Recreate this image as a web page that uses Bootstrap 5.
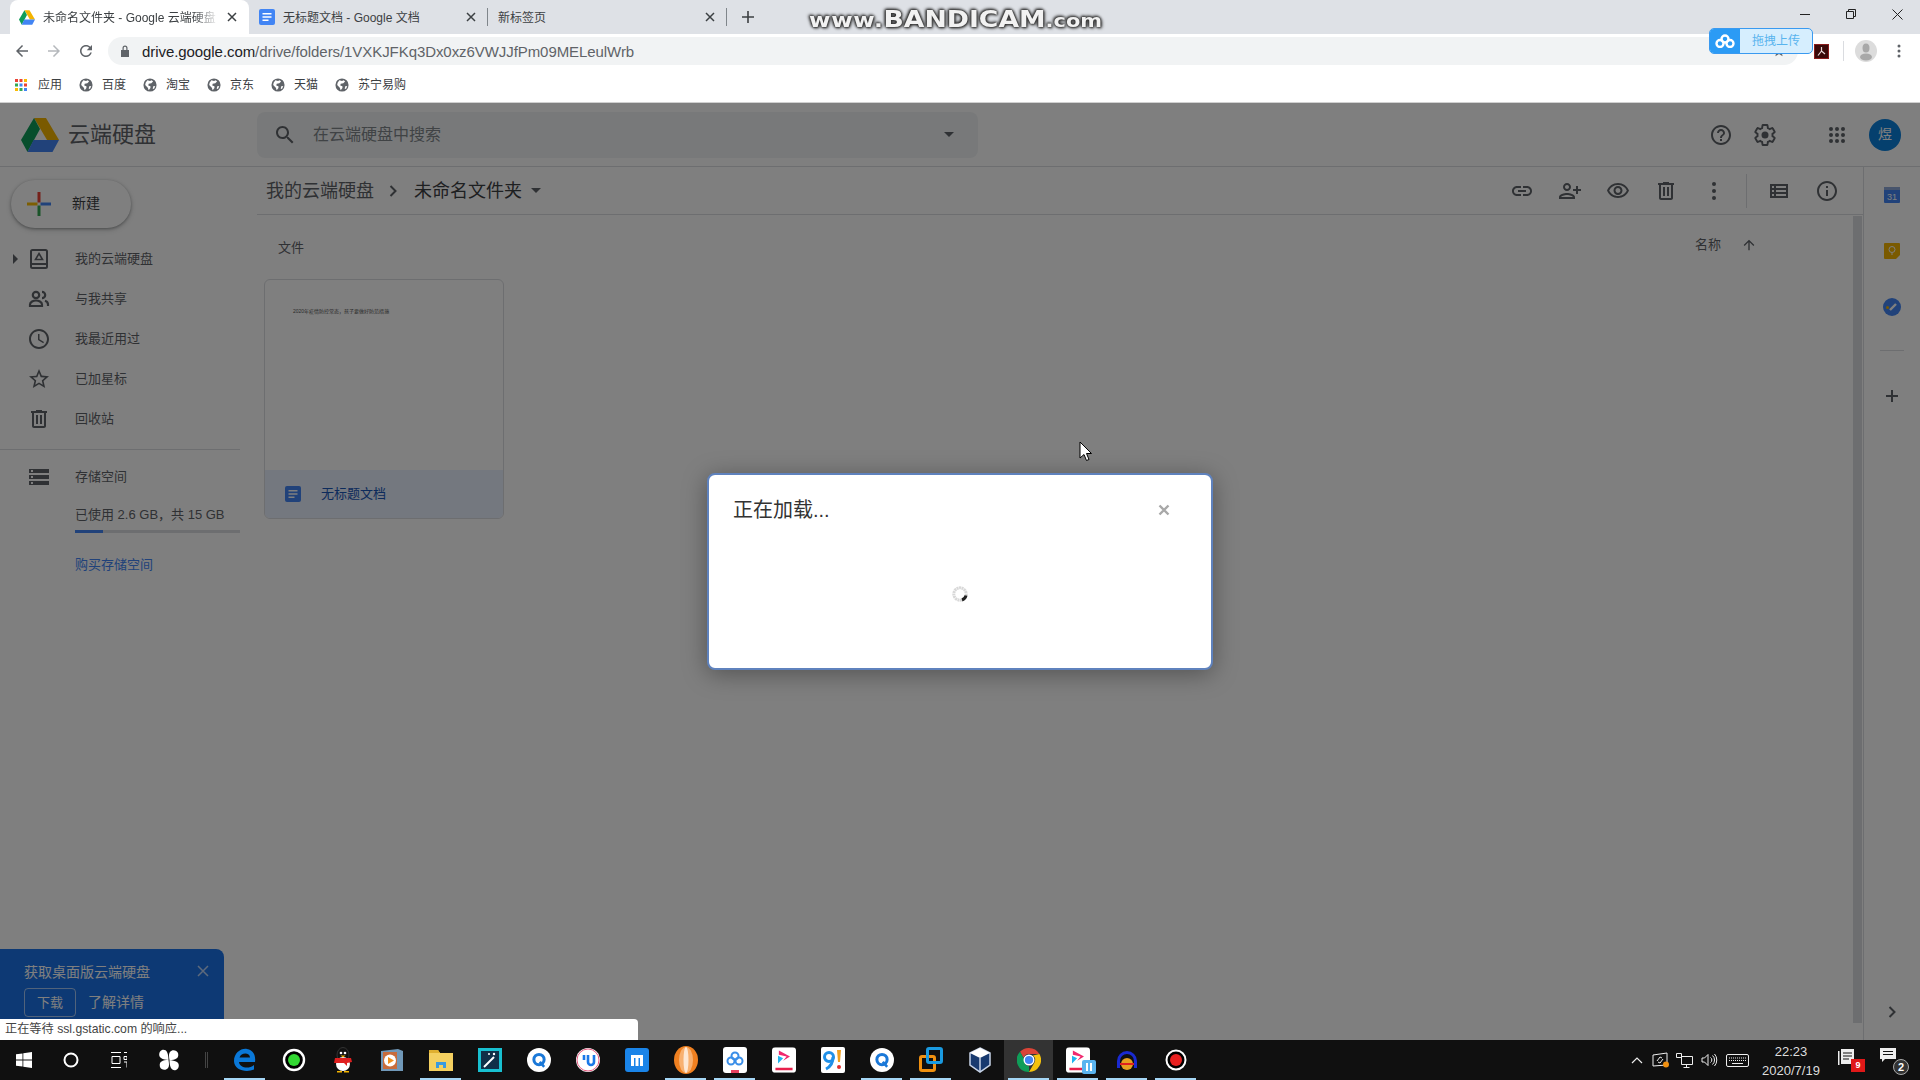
<!DOCTYPE html>
<html lang="zh-CN">
<head>
  <meta charset="UTF-8">
  <title>未命名文件夹 - Google 云端硬盘</title>
  <link href="https://cdn.jsdelivr.net/npm/bootstrap@5.3.2/dist/css/bootstrap.min.css" rel="stylesheet">
  <style>
    html, body { width: 1920px; height: 1080px; overflow: hidden; }
    body { font-family: "Liberation Sans", "Noto Sans CJK SC", sans-serif; font-size: 13px; color: #5f6368; background: #fff; position: relative; }
    svg { display: block; flex: none; }
    .ico { fill: #5f6368; }

    /* browser chrome */
    .tabstrip { height: 34px; background: #dee1e6; padding-left: 10px; color: #3c4043; font-size: 12px; }
    .ctab { width: 239px; height: 34px; padding-right: 8px; }
    .ctab-active { background: #fff; border-radius: 8px 8px 0 0; padding-left: 9px; }
    .ctab-second { padding-left: 10px; }
    .ctab-third { padding-left: 10px; }
    .ctab-line { position: relative; }
    .ctab-line::after { content: ""; position: absolute; right: 0; top: 8px; height: 18px; width: 1px; background: #80868b; }
    .ctab-title { flex: 1; overflow: hidden; white-space: nowrap; padding-top: 2px; }
    .ctab-fade { -webkit-mask-image: linear-gradient(to right, #000 85%, transparent 100%); mask-image: linear-gradient(to right, #000 85%, transparent 100%); }
    .tab-gap { margin-right: 4px; }
    .new-tab { margin-left: 14px; }
    .winbtns { margin-left: auto; width: 138px; height: 28px; align-self: flex-start; }
    .winbtns > div { width: 46px; }
    .toolbar { height: 34px; padding-left: 6px; }
    .tool-cell { width: 32px; }
    .omnibox { width: 1690px; height: 28px; margin-left: 6px; background: #f1f3f4; border-radius: 14px; padding: 0 12px; font-size: 15px; letter-spacing: -.07px; color: #5f6368; }
    .omni-url { margin-left: 4px; padding-top: 2px; }
    .omni-host { color: #202124; }
    .bookmarks { padding-left: 15px; gap: 17px; font-size: 12px; color: #3c4043; border-bottom: 1px solid #d0d0d0; height: 35px; }
    .mark-item { gap: 9px; }
    .mark-apps { gap: 11px; }
    .pdf-box { width: 15px; height: 15px; margin-left: 16px; background: #3b0a0a; border: 1px solid #8a1c1c; }
    .tool-sep { width: 1px; height: 20px; background: #dadce0; margin-left: 14px; }
    .chrome-user { width: 22px; height: 22px; border-radius: 50%; background: #dcdcdc; margin-left: 11px; }

    /* drive page */
    .drive { height: 937px; position: relative; overflow: hidden; }
    .drive-top { height: 64px; border-bottom: 1px solid #dadce0; }
    .brand { width: 257px; padding-left: 21px; font-size: 22px; gap: 9px; color: #5f6368; }
    .searchbox { width: 721px; height: 46px; background: #f1f3f4; border-radius: 8px; padding: 0 17px 0 16px; font-size: 16px; color: #80868b; }
    .searchbox-text { margin-left: 16px; flex: 1; }
    .caret-down { width: 0; height: 0; border-left: 5px solid transparent; border-right: 5px solid transparent; border-top: 5px solid #5f6368; }
    .search-caret { margin-right: 7px; }
    .top-actions { margin-left: auto; width: 220px; }
    .gear-ico { margin-left: 20px; }
    .apps-ico { margin-left: 52px; }
    .avatar { width: 32px; height: 32px; flex: none; border-radius: 50%; background: #0a80dc; color: #fff; font-size: 14px; margin-left: 24px; margin-right: 19px; }
    .drive-body { height: 873px; }

    .side { width: 257px; }
    .new-btn { width: 120px; height: 48px; margin: 13px 0 11px 11px; border-radius: 24px; background: #fff; box-shadow: 0 1px 3px rgba(60,64,67,.45), 0 2px 6px rgba(60,64,67,.2); padding: 0 0 0 16px; gap: 21px; font-size: 14px; color: #3c4043; border: 0; }
    .new-btn span { padding-bottom: 2px; }
    .side-item { height: 40px; padding-left: 27px; gap: 24px; position: relative; }
    .side-arrow { position: absolute; left: 13px; top: 15px; width: 0; height: 0; border-top: 5px solid transparent; border-bottom: 5px solid transparent; border-left: 5px solid #5f6368; }
    .side-rule { height: 1px; background: #dadce0; width: 240px; margin: 10px 0 7px; }
    .quota { padding-left: 75px; width: 240px; }
    .quota-text { margin-top: 6px; height: 24px; line-height: 24px; white-space: nowrap; font-size: 13px; }
    .quota-bar { height: 3px; margin-top: 3px; background: #dadce0; border-radius: 0; }
    .quota-bar .progress-bar { background: #4285f4; }
    .quota-link { display: block; margin-top: 22px; color: #4285f4; text-decoration: none; }

    .main { width: 1606px; }
    .crumbs { height: 48px; border-bottom: 1px solid #dadce0; padding-left: 9px; font-size: 18px; color: #5f6368; }
    .crumb-txt { padding-top: 2px; }
    .crumb-now { color: #3c4043; }
    .crumb-sep { margin: 0 17px 0 15px; }
    .crumb-caret { margin-left: 9px; }
    .acts { margin-left: auto; padding-right: 12px; height: 47px; }
    .act { width: 48px; }
    .act-rule { width: 1px; height: 34px; background: #dadce0; margin: 0 8px; }
    .content { padding-left: 7px; }
    .label-row { height: 24px; margin-top: 21px; margin-bottom: 19px; padding-left: 14px; padding-right: 96px; }
    .sorter { margin-top: -6px; gap: 20px; }
    .file-card { width: 240px; height: 240px; border: 1px solid #dadce0; border-radius: 6px; overflow: hidden; background: #fff; }
    .file-thumb { height: 191px; padding: 27px 0 0 28px; font-size: 5px; line-height: 8px; color: #555; white-space: nowrap; }
    .file-foot { height: 48px; background: #e8f0fe; color: #1a56b8; padding-left: 20px; gap: 20px; }
    .bar-track { width: 10px; }
    .bar-thumb { width: 9px; height: 807px; margin-top: 1px; background: #dadce0; }

    .rail { width: 57px; border-left: 1px solid #dadce0; }
    .rail-cell { height: 56px; }
    .rail-rule { width: 24px; height: 1px; background: #dadce0; margin: 15px 0 0; }
    .rail-plus { margin-top: 38px; }
    .rail-end { margin-top: auto; margin-bottom: 22px; }

    .toast-box { position: absolute; left: 0; bottom: 0; width: 224px; height: 91px; background: #1a73e8; color: #fff; border-radius: 0 8px 0 0; padding: 13px 0 0 24px; font-size: 14px; }
    .toast-x { position: absolute; right: 15px; top: 16px; }
    .toast-btn { width: 52px; height: 29px; padding: 0; font-size: 13px; color: #fff; border: 1px solid rgba(255,255,255,.6); border-radius: 4px; margin-top: 5px; }
    .toast-more { margin-left: 12px; margin-top: 5px; }

    .dimmer { position: absolute; inset: 0; background: rgba(0,0,0,.5); }
    .status-tip { position: absolute; left: 0; bottom: 0; width: 638px; height: 21px; line-height: 21px; padding-left: 5px; background: #fff; border-radius: 0 4px 0 0; font-size: 12.2px; color: #444; }

    .load-box { position: absolute; left: 707px; top: 370px; width: 506px; height: 197px; border: 2px solid #5f82bd; border-radius: 8px; background: #fff; box-shadow: 0 4px 24px rgba(0,0,0,.35); }
    .load-head { padding: 20px 24px 0 24px; font-size: 20px; color: #333; }
    .load-close { border: 0; margin-right: 17px; line-height: 0; }
    .load-spin { margin: 61px auto 0; }
    .pointer { position: absolute; left: 1079px; top: 441px; z-index: 5; }

    /* overlays on the browser frame */
    .bandicam { position: absolute; left: 809px; top: 2px; font-family: "DejaVu Sans", sans-serif; font-weight: 700; color: #f2f2f2; white-space: nowrap; line-height: 34px; text-shadow: 0 0 2px #333, 0 0 3px #333, 1px 1px 3px #333, -1px -1px 3px #333; transform: scaleX(1.16); transform-origin: left; }
    .bandicam-big { font-size: 23px; }
    .bandicam-sm { font-size: 18px; }
    .bandicam-www { font-size: 20px; letter-spacing: .6px; }
    .pan-drop { position: absolute; left: 1709px; top: 28px; width: 104px; height: 26px; border: 1px solid #3a9af0; border-radius: 5px; background: #d6eefe; overflow: hidden; color: #59b4ee; font-size: 12px; }
    .pan-logo { width: 30px; background: #2b9bf5; height: 100%; }

    /* windows taskbar */
    .taskbar { position: absolute; left: 0; right: 0; bottom: 0; height: 40px; background: #101010; color: #fff; }
    .task-start { width: 220px; height: 40px; }
    .task-start > div { position: absolute; top: 0; height: 40px; }
    .task-cell { width: 49px; height: 40px; position: relative; }
    .task-on::after { content: ""; position: absolute; left: 4px; right: 4px; bottom: 0; height: 2px; background: #a5d6f5; }
    .task-now { background: #333; }
    .task-start > .task-divider { left: 205px; top: 12px; width: 3px; height: 16px; border-left: 1px solid #444; border-right: 1px solid #444; }
    .tray { margin-left: auto; padding-right: 18px; }
    .tray-chevron { margin-right: 5px; }
    .tray-net { margin-left: 6px; }
    .clock { width: 72px; font-size: 13px; line-height: 19px; text-align: center; color: #ddd; margin-left: 6px; margin-right: 11px; padding-top: 2px; }
    .note-wrap { position: relative; width: 22px; height: 24px; }
    .note-last { margin-left: 20px; }
    .note-badge { position: absolute; right: -5px; bottom: 0; width: 14px; height: 13px; background: #e01818; color: #fff; font-size: 9px; font-weight: 700; line-height: 13px; text-align: center; }
    .note-count { position: absolute; right: -7px; bottom: -3px; width: 16px; height: 16px; border-radius: 50%; background: #333; border: 1px solid #aaa; color: #fff; font-size: 11px; font-weight: 700; line-height: 14px; text-align: center; }
    .youku-pause { position: absolute; left: 29px; top: 20px; }
  </style>
</head>
<body>

<svg width="0" height="0" class="position-absolute">
  <symbol id="i-drive" viewBox="0 0 38 34">
    <path fill="#f4b400" d="M13 0h12l13 22H26z"/>
    <path fill="#0f9d58" d="M13 0l6 11L6.500 34 0 22z"/>
    <path fill="#4285f4" d="M12.500 22H38l-6.500 12H6.500z"/>
  </symbol>
  <symbol id="i-doc" viewBox="0 0 16 16">
    <rect width="16" height="16" rx="2" fill="#4285f4"/>
    <path fill="#fff" d="M3.500 4h9v1.600h-9zM3.500 7.200h9v1.600h-9zM3.500 10.400h6v1.600h-6z"/>
  </symbol>
  <symbol id="i-globe" viewBox="0 0 16 16">
    <circle cx="8" cy="8" r="7.500" fill="#5f6368"/>
    <path fill="#fff" d="M5 2.500l3 1 2-1 1.500 1.500-2 2-3 .5-.5 2 2.500 1v2L6.500 14l-1-3-3-3 .5-2.500zM12 9l2 .5-1.500 3-1.500-.5z"/>
  </symbol>
  <symbol id="i-trash" viewBox="0 0 24 24"><path d="M15 4V3H9v1H4v2h1v13c0 1.100.9 2 2 2h10c1.100 0 2-.9 2-2V6h1V4h-5zm2 15H7V6h10v13zM9 8h2v9H9zm4 0h2v9h-2z"/></symbol>
  <symbol id="i-qq" viewBox="0 0 28 28">
    <circle cx="14" cy="14" r="14" fill="#fff"/>
    <circle cx="14" cy="13.500" r="6" fill="none" stroke="#1a78d8" stroke-width="3.500"/>
    <path d="M15 16l5 6" stroke="#1a78d8" stroke-width="3"/>
  </symbol>
  <symbol id="i-youku" viewBox="0 0 28 30">
    <rect width="28" height="30" rx="4" fill="#fff"/>
    <path fill="#f0286e" d="M8 4l13 7-8 5 4-5-9-2z"/>
    <path fill="#1eb4f0" d="M7 10l6 3-6 6z"/>
    <path fill="#e8204c" d="M4 24h20v3H4z"/>
  </symbol>
</svg>

<!-- Tab strip -->
<div class="tabstrip d-flex">
  <div class="ctab ctab-active d-flex align-items-center">
    <svg width="16" height="15" class="me-2"><use href="#i-drive"/></svg>
    <span class="ctab-title ctab-fade">未命名文件夹 - Google 云端硬盘</span>
    <svg width="10" height="10" viewBox="0 0 10 10" class="tab-gap ms-2"><path d="M1 1l8 8M9 1l-8 8" stroke="#3c4043" stroke-width="1.500"/></svg>
  </div>
  <div class="ctab ctab-second ctab-line d-flex align-items-center">
    <svg width="16" height="16" class="me-2" viewBox="0 0 16 16"><use href="#i-doc"/></svg>
    <span class="ctab-title">无标题文档 - Google 文档</span>
    <svg width="10" height="10" viewBox="0 0 10 10" class="tab-gap"><path d="M1 1l8 8M9 1l-8 8" stroke="#3c4043" stroke-width="1.500"/></svg>
  </div>
  <div class="ctab ctab-third ctab-line d-flex align-items-center">
    <span class="ctab-title">新标签页</span>
    <svg width="10" height="10" viewBox="0 0 10 10" class="tab-gap"><path d="M1 1l8 8M9 1l-8 8" stroke="#3c4043" stroke-width="1.500"/></svg>
  </div>
  <div class="d-flex align-items-center new-tab">
    <svg width="14" height="14" viewBox="0 0 14 14"><path d="M7 1v12M1 7h12" stroke="#3c4043" stroke-width="1.600"/></svg>
  </div>
  <div class="winbtns d-flex">
    <div class="d-flex align-items-center justify-content-center"><svg width="10" height="10" viewBox="0 0 10 10"><path d="M0 5.500h10" stroke="#222"/></svg></div>
    <div class="d-flex align-items-center justify-content-center"><svg width="10" height="10" viewBox="0 0 10 10"><path d="M.5 2.500h7v7h-7zM2.500 2.500v-2h7v7h-2" fill="none" stroke="#222"/></svg></div>
    <div class="d-flex align-items-center justify-content-center"><svg width="11" height="11" viewBox="0 0 11 11"><path d="M.5.500l10 10M10.500.500l-10 10" stroke="#222"/></svg></div>
  </div>
</div>

<!-- Toolbar -->
<div class="toolbar d-flex align-items-center">
  <div class="tool-cell d-flex justify-content-center"><svg width="18" height="18" viewBox="0 0 24 24" fill="#5f6368"><path d="M20 11H7.830l5.590-5.590L12 4l-8 8 8 8 1.410-1.410L7.830 13H20v-2z"/></svg></div>
  <div class="tool-cell d-flex justify-content-center"><svg width="18" height="18" viewBox="0 0 24 24" fill="#b5b8bc"><path d="M4 11h12.170l-5.590-5.590L12 4l8 8-8 8-1.410-1.410L16.170 13H4v-2z"/></svg></div>
  <div class="tool-cell d-flex justify-content-center"><svg width="18" height="18" viewBox="0 0 24 24" fill="#5f6368"><path d="M17.650 6.350C16.200 4.900 14.210 4 12 4c-4.420 0-7.990 3.580-7.990 8s3.570 8 7.990 8c3.730 0 6.840-2.550 7.730-6h-2.080c-.82 2.330-3.040 4-5.650 4-3.310 0-6-2.690-6-6s2.690-6 6-6c1.660 0 3.140.69 4.220 1.780L13 11h7V4l-2.350 2.350z"/></svg></div>
  <div class="omnibox d-flex align-items-center">
    <svg width="10" height="12" viewBox="0 0 10 12" class="me-2"><path fill="#5f6368" d="M1 5h8v7H1zM2.500 5V3a2.500 2.500 0 0 1 5 0v2H6.300V3a1.300 1.300 0 0 0-2.600 0v2z"/></svg>
    <span class="omni-url"><span class="omni-host">drive.google.com</span>/drive/folders/1VXKJFKq3Dx0xz6VWJJfPm09MELeulWrb</span>
    <svg class="ms-auto" width="14" height="14" viewBox="0 0 24 24" fill="#5f6368"><path d="M22 9.240l-7.190-.62L12 2 9.190 8.630 2 9.240l5.460 4.730L5.820 21 12 17.270 18.180 21l-1.630-7.030L22 9.240zM12 15.400l-3.760 2.270 1-4.280-3.320-2.880 4.380-.38L12 6.100l1.710 4.040 4.380.38-3.320 2.880 1 4.280L12 15.400z"/></svg>
  </div>
  <div class="pdf-box d-flex align-items-center justify-content-center">
    <svg width="11" height="11" viewBox="0 0 11 11"><path d="M5.500 1v4M5.500 5L2 9.500M5.500 5L9 8" stroke="#e8d8d8" fill="none" stroke-width="1.200"/></svg>
  </div>
  <div class="tool-sep"></div>
  <div class="chrome-user d-flex justify-content-center overflow-hidden">
    <svg width="22" height="22" viewBox="0 0 22 22" fill="#a8a8a8"><ellipse cx="11" cy="8" rx="3.500" ry="4.500"/><ellipse cx="11" cy="17" rx="6" ry="3.500"/></svg>
  </div>
  <div class="ms-3 ps-1 d-flex align-items-center">
    <svg width="4" height="14" viewBox="0 0 4 14" fill="#5f6368"><circle cx="2" cy="2" r="1.500"/><circle cx="2" cy="7" r="1.500"/><circle cx="2" cy="12" r="1.500"/></svg>
  </div>
</div>

<!-- Bookmarks bar -->
<div class="bookmarks d-flex align-items-center">
  <div class="mark-item mark-apps d-flex align-items-center">
    <svg width="12" height="12" viewBox="0 0 12 12"><g><rect width="3" height="3" fill="#ea4335"/><rect x="4.500" width="3" height="3" fill="#ea4335"/><rect x="9" width="3" height="3" fill="#fbbc04"/><rect y="4.500" width="3" height="3" fill="#34a853"/><rect x="4.500" y="4.500" width="3" height="3" fill="#4285f4"/><rect x="9" y="4.500" width="3" height="3" fill="#ea4335"/><rect y="9" width="3" height="3" fill="#fbbc04"/><rect x="4.500" y="9" width="3" height="3" fill="#34a853"/><rect x="9" y="9" width="3" height="3" fill="#4285f4"/></g></svg>
    <span>应用</span>
  </div>
  <div class="mark-item d-flex align-items-center"><svg width="14" height="14"><use href="#i-globe"/></svg><span>百度</span></div>
  <div class="mark-item d-flex align-items-center"><svg width="14" height="14"><use href="#i-globe"/></svg><span>淘宝</span></div>
  <div class="mark-item d-flex align-items-center"><svg width="14" height="14"><use href="#i-globe"/></svg><span>京东</span></div>
  <div class="mark-item d-flex align-items-center"><svg width="14" height="14"><use href="#i-globe"/></svg><span>天猫</span></div>
  <div class="mark-item d-flex align-items-center"><svg width="14" height="14"><use href="#i-globe"/></svg><span>苏宁易购</span></div>
</div>

<!-- Drive page -->
<div class="drive">
  <div class="drive-top d-flex align-items-center">
    <div class="brand d-flex align-items-center">
      <svg width="38" height="34"><use href="#i-drive"/></svg>
      <span>云端硬盘</span>
    </div>
    <div class="searchbox d-flex align-items-center">
      <svg width="24" height="24" viewBox="0 0 24 24" class="ico"><path d="M15.500 14h-.79l-.28-.27C15.410 12.590 16 11.110 16 9.500 16 5.910 13.090 3 9.500 3S3 5.910 3 9.500 5.910 16 9.500 16c1.610 0 3.090-.59 4.230-1.570l.27.28v.79l5 4.990L20.490 19l-4.990-5zm-6 0C7.010 14 5 11.990 5 9.500S7.010 5 9.500 5 14 7.010 14 9.500 11.990 14 9.500 14z"/></svg>
      <span class="searchbox-text">在云端硬盘中搜索</span>
      <span class="caret-down search-caret"></span>
    </div>
    <div class="top-actions d-flex align-items-center">
      <svg width="24" height="24" viewBox="0 0 24 24" class="ico ms-auto"><path d="M11 18h2v-2h-2v2zm1-16C6.480 2 2 6.480 2 12s4.480 10 10 10 10-4.480 10-10S17.520 2 12 2zm0 18c-4.410 0-8-3.590-8-8s3.590-8 8-8 8 3.590 8 8-3.590 8-8 8zm0-14c-2.210 0-4 1.790-4 4h2c0-1.100.9-2 2-2s2 .9 2 2c0 2-3 1.750-3 5h2c0-2.250 3-2.500 3-5 0-2.210-1.790-4-4-4z"/></svg>
      <svg width="24" height="24" viewBox="0 0 24 24" class="gear-ico"><path fill="none" stroke="#5f6368" stroke-width="1.900" d="M19.430 12.980c.04-.32.07-.64.07-.98s-.03-.66-.07-.98l2.110-1.650c.19-.15.24-.42.12-.64l-2-3.460c-.12-.22-.39-.3-.61-.22l-2.490 1c-.52-.4-1.080-.73-1.690-.98l-.38-2.650C14.460 2.180 14.250 2 14 2h-4c-.25 0-.46.18-.49.42l-.38 2.650c-.61.25-1.170.59-1.690.98l-2.490-1c-.23-.09-.49 0-.61.22l-2 3.460c-.13.22-.07.49.12.64l2.110 1.650c-.04.32-.07.65-.07.98s.03.66.07.98l-2.110 1.650c-.19.15-.24.42-.12.64l2 3.460c.12.22.39.3.61.22l2.490-1c.52.4 1.080.73 1.690.98l.38 2.650c.03.24.24.42.49.42h4c.25 0 .46-.18.49-.42l.38-2.650c.61-.25 1.170-.59 1.690-.98l2.490 1c.23.09.49 0 .61-.22l2-3.460c.12-.22.07-.49-.12-.64l-2.110-1.650z"/><circle cx="12" cy="12" r="3.500" fill="#5f6368"/></svg>
      <svg width="16" height="16" viewBox="0 0 16 16" class="ico apps-ico"><circle cx="2" cy="2" r="2"/><circle cx="8" cy="2" r="2"/><circle cx="14" cy="2" r="2"/><circle cx="2" cy="8" r="2"/><circle cx="8" cy="8" r="2"/><circle cx="14" cy="8" r="2"/><circle cx="2" cy="14" r="2"/><circle cx="8" cy="14" r="2"/><circle cx="14" cy="14" r="2"/></svg>
      <div class="avatar d-flex align-items-center justify-content-center">煜</div>
    </div>
  </div>

  <div class="drive-body d-flex">
    <!-- Left navigation -->
    <div class="side">
      <button type="button" class="btn new-btn d-flex align-items-center">
        <svg width="24" height="24" viewBox="0 0 24 24"><path fill="#ea4335" d="M10.500 0h3v10.500h-3z"/><path fill="#4285f4" d="M13.500 10.500H24v3H13.500z"/><path fill="#34a853" d="M10.500 13.500h3V24h-3z"/><path fill="#fbbc04" d="M0 10.500h10.500v3H0z"/></svg>
        <span>新建</span>
      </button>
      <div class="side-item d-flex align-items-center">
        <span class="side-arrow"></span>
        <svg width="24" height="24" viewBox="0 0 24 24"><rect x="4" y="3" width="16" height="18" rx="1.500" fill="none" stroke="#5f6368" stroke-width="2"/><path d="M4 17h16" stroke="#5f6368" stroke-width="2"/><path d="M12 6.500l3.500 6h-7z" fill="none" stroke="#5f6368" stroke-width="1.600"/></svg>
        <span>我的云端硬盘</span>
      </div>
      <div class="side-item d-flex align-items-center">
        <svg width="24" height="24" viewBox="0 0 24 24" fill="none" stroke="#5f6368" stroke-width="2.200"><circle cx="9" cy="8" r="3.200"/><path d="M3 19v-1.500c0-2.500 3.500-4 6-4s6 1.500 6 4V19z"/><path d="M15 4.800a3.200 3.200 0 0 1 0 6.400M18 13.800c1.800.6 3 1.800 3 3.700V19"/></svg>
        <span>与我共享</span>
      </div>
      <div class="side-item d-flex align-items-center">
        <svg width="24" height="24" viewBox="0 0 24 24" class="ico"><path d="M11.990 2C6.470 2 2 6.480 2 12s4.470 10 9.990 10C17.520 22 22 17.520 22 12S17.520 2 11.990 2zM12 20c-4.420 0-8-3.580-8-8s3.580-8 8-8 8 3.580 8 8-3.580 8-8 8zm.5-13H11v6l5.250 3.150.75-1.230-4.500-2.670z"/></svg>
        <span>我最近用过</span>
      </div>
      <div class="side-item d-flex align-items-center">
        <svg width="24" height="24" viewBox="0 0 24 24" class="ico"><path d="M22 9.240l-7.190-.62L12 2 9.190 8.630 2 9.240l5.460 4.730L5.820 21 12 17.270 18.180 21l-1.630-7.030L22 9.240zM12 15.400l-3.760 2.270 1-4.280-3.320-2.880 4.380-.38L12 6.100l1.710 4.040 4.380.38-3.320 2.880 1 4.280L12 15.400z"/></svg>
        <span>已加星标</span>
      </div>
      <div class="side-item d-flex align-items-center">
        <svg width="24" height="24" class="ico"><use href="#i-trash"/></svg>
        <span>回收站</span>
      </div>
      <div class="side-rule"></div>
      <div class="side-item d-flex align-items-center">
        <svg width="24" height="24" viewBox="0 0 24 24" class="ico"><path d="M2 20h20v-4H2v4zm2-3h2v2H4v-2zM2 4v4h20V4H2zm4 3H4V5h2v2zm-4 7h20v-4H2v4zm2-3h2v2H4v-2z"/></svg>
        <span>存储空间</span>
      </div>
      <div class="quota">
        <div class="quota-text">已使用 2.6 GB，共 15 GB</div>
        <div class="progress quota-bar"><div class="progress-bar" style="width: 17%"></div></div>
        <a class="quota-link" href="#">购买存储空间</a>
      </div>
    </div>

    <!-- Folder view -->
    <div class="main d-flex flex-column">
      <div class="crumbs d-flex align-items-center">
        <span class="crumb-txt">我的云端硬盘</span>
        <svg class="crumb-sep" width="8" height="12" viewBox="0 0 8 12"><path d="M1.500 1l5 5-5 5" fill="none" stroke="#5f6368" stroke-width="2"/></svg>
        <span class="crumb-txt crumb-now">未命名文件夹</span>
        <span class="caret-down crumb-caret"></span>
        <div class="acts d-flex align-items-center">
          <div class="act d-flex justify-content-center"><svg width="24" height="24" viewBox="0 0 24 24" class="ico"><path d="M3.900 12c0-1.710 1.390-3.100 3.100-3.100h4V7H7c-2.760 0-5 2.240-5 5s2.240 5 5 5h4v-1.900H7c-1.710 0-3.100-1.390-3.100-3.100zM8 13h8v-2H8v2zm9-6h-4v1.900h4c1.710 0 3.100 1.390 3.100 3.100s-1.390 3.100-3.100 3.100h-4V17h4c2.760 0 5-2.240 5-5s-2.240-5-5-5z"/></svg></div>
          <div class="act d-flex justify-content-center"><svg width="24" height="24" viewBox="0 0 24 24" class="ico"><g transform="translate(24,0) scale(-1,1)"><path d="M15 12c2.210 0 4-1.790 4-4s-1.790-4-4-4-4 1.790-4 4 1.790 4 4 4zm0-6c1.100 0 2 .9 2 2s-.9 2-2 2-2-.9-2-2 .9-2 2-2zm0 8c-2.670 0-8 1.340-8 4v2h16v-2c0-2.660-5.330-4-8-4zm-6 4c.22-.72 3.310-2 6-2 2.700 0 5.800 1.290 6 2H9zm-3-3v-3h3v-2H6V7H4v3H1v2h3v3h2z"/></g></svg></div>
          <div class="act d-flex justify-content-center"><svg width="24" height="24" viewBox="0 0 24 24" class="ico"><path d="M12 6a9.770 9.770 0 0 1 8.820 5.500C19.170 14.870 15.790 17 12 17s-7.170-2.130-8.820-5.500A9.770 9.770 0 0 1 12 6m0-2C7 4 2.730 7.110 1 11.500 2.730 15.890 7 19 12 19s9.270-3.110 11-7.500C21.270 7.110 17 4 12 4zm0 5a2.500 2.500 0 0 1 0 5 2.500 2.500 0 0 1 0-5m0-2c-2.480 0-4.500 2.020-4.500 4.500S9.520 16 12 16s4.500-2.020 4.500-4.500S14.480 7 12 7z"/></svg></div>
          <div class="act d-flex justify-content-center"><svg width="24" height="24" class="ico"><use href="#i-trash"/></svg></div>
          <div class="act d-flex justify-content-center"><svg width="24" height="24" viewBox="0 0 24 24" class="ico"><circle cx="12" cy="5" r="2"/><circle cx="12" cy="12" r="2"/><circle cx="12" cy="19" r="2"/></svg></div>
          <div class="act-rule"></div>
          <div class="act d-flex justify-content-center"><svg width="24" height="24" viewBox="0 0 24 24" class="ico"><path d="M3 5v14h18V5H3zm4 2v2H5V7h2zm-2 6v-2h2v2H5zm0 2h2v2H5v-2zm14 2H9v-2h10v2zm0-4H9v-2h10v2zm0-4H9V7h10v2z"/></svg></div>
          <div class="act d-flex justify-content-center"><svg width="24" height="24" viewBox="0 0 24 24" class="ico"><path d="M11 7h2v2h-2zm0 4h2v6h-2zm1-9C6.480 2 2 6.480 2 12s4.480 10 10 10 10-4.480 10-10S17.520 2 12 2zm0 18c-4.410 0-8-3.590-8-8s3.590-8 8-8 8 3.590 8 8-3.590 8-8 8z"/></svg></div>
        </div>
      </div>
      <div class="d-flex flex-grow-1">
        <div class="content flex-grow-1">
          <div class="label-row d-flex justify-content-between align-items-center">
            <span>文件</span>
            <div class="sorter d-flex align-items-center">
              <span>名称</span>
              <svg width="16" height="16" viewBox="0 0 24 24" class="ico"><path d="M4 12l1.410 1.410L11 7.830V20h2V7.830l5.580 5.590L20 12l-8-8-8 8z"/></svg>
            </div>
          </div>
          <div class="file-card card">
            <div class="file-thumb">2020年疫情防控常态，孩子要做好防范措施</div>
            <div class="file-foot d-flex align-items-center">
              <svg width="16" height="16"><use href="#i-doc"/></svg>
              <span>无标题文档</span>
            </div>
          </div>
        </div>
        <div class="bar-track"><div class="bar-thumb"></div></div>
      </div>
    </div>

    <!-- Side apps -->
    <div class="rail d-flex flex-column align-items-center">
      <div class="rail-cell d-flex align-items-center justify-content-center">
        <svg width="16" height="16" viewBox="0 0 16 16"><rect width="16" height="16" rx="1" fill="#4285f4"/><rect width="16" height="3" fill="#8fa8d8"/><text x="8" y="13" text-anchor="middle" font-size="9" font-family="Liberation Sans" fill="#fff">31</text></svg>
      </div>
      <div class="rail-cell d-flex align-items-center justify-content-center">
        <svg width="16" height="16" viewBox="0 0 16 16"><path fill="#f4b400" d="M1 0h14a1 1 0 0 1 1 1v11l-4 4H1a1 1 0 0 1-1-1V1a1 1 0 0 1 1-1z"/><circle cx="8" cy="6.500" r="3" fill="none" stroke="#fff"/><path d="M7 11h2" stroke="#fff"/></svg>
      </div>
      <div class="rail-cell d-flex align-items-center justify-content-center">
        <svg width="18" height="18" viewBox="0 0 18 18"><circle cx="9" cy="9" r="9" fill="#4285f4"/><path d="M7 12l6-6" stroke="#fff" stroke-width="2.400"/><circle cx="4.500" cy="9.500" r="1.500" fill="#f4b400"/></svg>
      </div>
      <div class="rail-rule"></div>
      <svg class="rail-plus" width="14" height="14" viewBox="0 0 14 14"><path d="M7 1v12M1 7h12" stroke="#5f6368" stroke-width="2"/></svg>
      <svg class="rail-end" width="8" height="12" viewBox="0 0 8 12"><path d="M1.500 1l5 5-5 5" fill="none" stroke="#5f6368" stroke-width="2"/></svg>
    </div>
  </div>

  <!-- Desktop promo -->
  <div class="toast-box">
    <svg class="toast-x" width="12" height="12" viewBox="0 0 12 12"><path d="M1 1l10 10M11 1L1 11" stroke="#bcd4f8" stroke-width="1.500"/></svg>
    <div>获取桌面版云端硬盘</div>
    <div class="d-flex align-items-center">
      <button type="button" class="btn toast-btn">下载</button>
      <span class="toast-more">了解详情</span>
    </div>
  </div>

  <div class="dimmer"></div>

  <div class="status-tip">正在等待 ssl.gstatic.com 的响应...</div>

  <!-- Loading dialog -->
  <div class="load-box">
    <div class="load-head d-flex align-items-center justify-content-between">
      <span>正在加载...</span>
      <button type="button" class="btn p-0 load-close" aria-label="Close">
        <svg width="12" height="12" viewBox="0 0 12 12"><path d="M1.500 1.500l9 9M10.500 1.500l-9 9" stroke="#a8a8a8" stroke-width="2.400"/></svg>
      </button>
    </div>
    <svg class="load-spin" width="16" height="16" viewBox="0 0 16 16" fill="none" stroke-width="3">
      <circle cx="8" cy="8" r="6.200" stroke="#d8d8d8" stroke-dasharray="2 .5"/>
      <path d="M14 9.500A6.200 6.200 0 0 1 10 14" stroke="#222"/>
    </svg>
  </div>
</div>

<!-- Floating items -->
<div class="bandicam"><span class="bandicam-www">www.</span><span class="bandicam-big">BANDICAM</span><span class="bandicam-sm">.com</span></div>

<div class="pan-drop d-flex align-items-center">
  <div class="pan-logo d-flex align-items-center justify-content-center">
    <svg width="20" height="14" viewBox="0 0 20 14" fill="none" stroke="#fff" stroke-width="2.400"><circle cx="10" cy="5" r="3.500"/><circle cx="5" cy="9.500" r="3.500"/><circle cx="15" cy="9.500" r="3.500"/></svg>
  </div>
  <div class="flex-grow-1 text-center">拖拽上传</div>
</div>

<svg class="pointer" width="13" height="21" viewBox="0 0 13 21"><path d="M1 1v16l4-3.500 2.500 6 2.500-1-2.500-6H12.500z" fill="#fff" stroke="#000"/></svg>

<!-- Taskbar -->
<div class="taskbar d-flex align-items-center">
  <div class="task-start position-relative">
    <div class="d-flex align-items-center start-0 ms-3">
      <svg width="16" height="16" viewBox="0 0 16 16" fill="#fff"><path d="M0 2.300l6.500-.9v6.200H0zM7.300 1.300L16 0v7.600H7.300zM0 8.400h6.500v6.200L0 13.700zM7.300 8.400H16V16l-8.700-1.200z"/></svg>
    </div>
    <div class="d-flex align-items-center" style="left: 63px">
      <svg width="16" height="16" viewBox="0 0 16 16"><circle cx="8" cy="8" r="6.500" fill="none" stroke="#fff" stroke-width="2"/></svg>
    </div>
    <div class="d-flex align-items-center" style="left: 111px">
      <svg width="16" height="16" viewBox="0 0 16 16" fill="none" stroke="#fff"><path d="M0 .5h10M0 15.500h10M1 4.500h8v7H1zM13 .5h3M13 4.500h3v3h-3zM13 10h3v5.500"/></svg>
    </div>
    <div class="d-flex align-items-center" style="left: 159px">
      <svg width="20" height="22" viewBox="0 0 20 22" fill="#fff"><path d="M9.500 11C9.500 3 7 0 3 1 0 2-1 7 2 9c2 1.500 5 1.500 7.500 2zM10.500 11C18.500 11 20 8 19 4c-1-3-6-4-8-1-1.500 2-1 5-.5 8zM9.500 11C1.500 11 0 14 1 18c1 3 6 4 8 1 1.500-2 1-5 .5-8zM10.500 11c0 8 2.500 11 6.500 10 3-1 4-6 1-8-2-1.500-5-1.500-7.500-2z"/></svg>
    </div>
    <div class="task-divider"></div>
  </div>

  <div class="task-cell task-on d-flex align-items-center justify-content-center">
    <svg width="26" height="26" viewBox="0 0 26 26" fill="none"><path d="M23 15H7c.3 5 9 8 15 3v4.500C14 26 2 23 2 14 2 6 9 1 15 2c6 1 9 6 8 13zM7.500 10.500H18C18 5 9 5 7.500 10.500z" fill="#0a78d8"/></svg>
  </div>
  <div class="task-cell d-flex align-items-center justify-content-center">
    <svg width="24" height="24" viewBox="0 0 24 24"><circle cx="12" cy="12" r="10" fill="#000" stroke="#fff" stroke-width="2.400"/><circle cx="12" cy="12" r="6" fill="#32d832"/></svg>
  </div>
  <div class="task-cell d-flex align-items-center justify-content-center">
    <svg width="22" height="26" viewBox="0 0 22 26"><ellipse cx="11" cy="8" rx="6" ry="7.500" fill="#111" stroke="#333"/><ellipse cx="11" cy="17" rx="7" ry="7" fill="#fff"/><path d="M3 11h16l1 4-5 1v3l-3-3H2z" fill="#e02020"/><circle cx="9" cy="6" r="1.300" fill="#fff"/><circle cx="13" cy="6" r="1.300" fill="#fff"/><path d="M8.500 8.500h5L11 10.500z" fill="#f4b400"/><path d="M5 24h5v1.500H5zM12 24h5v1.500h-5z" fill="#f4b400"/></svg>
  </div>
  <div class="task-cell d-flex align-items-center justify-content-center">
    <svg width="22" height="24" viewBox="0 0 22 24"><path d="M0 3l17-2 5 2v20H0z" fill="#7098b8"/><rect x="2" y="4" width="14" height="17" fill="#c86c3c"/><circle cx="9" cy="12.500" r="6" fill="#fff"/><path d="M7 9l6 3.500L7 16z" fill="#f09020"/></svg>
  </div>
  <div class="task-cell task-on d-flex align-items-center justify-content-center">
    <svg width="24" height="22" viewBox="0 0 24 22"><path d="M0 1h9l2 3h13v18H0z" fill="#f4d060"/><path d="M0 1h9l2 3H0z" fill="#e0b030"/><path d="M7 13h10v6h-3v-3h-4v3H7z" fill="#3a9ae0"/></svg>
  </div>
  <div class="task-cell d-flex align-items-center justify-content-center">
    <svg width="24" height="24" viewBox="0 0 24 24"><rect width="24" height="24" fill="#18c0d0"/><rect x="3" y="3" width="18" height="18" fill="#103048"/><path d="M6 19L16 9" stroke="#fff" stroke-width="2"/><circle cx="16" cy="6" r="1.200" fill="#fff"/><circle cx="11" cy="6" r="1" fill="#fff"/></svg>
  </div>
  <div class="task-cell d-flex align-items-center justify-content-center"><svg width="24" height="24" viewBox="0 0 28 28"><use href="#i-qq"/></svg></div>
  <div class="task-cell d-flex align-items-center justify-content-center">
    <svg width="24" height="24" viewBox="0 0 24 24"><circle cx="12" cy="12" r="12" fill="#fff"/><circle cx="12" cy="12" r="11" fill="none" stroke="#e03060" stroke-width=".8"/><path d="M8 7v5M12 7v7a3 3 0 0 0 6 0V7" fill="none" stroke="#1a78e8" stroke-width="2.600"/></svg>
  </div>
  <div class="task-cell d-flex align-items-center justify-content-center">
    <svg width="24" height="24" viewBox="0 0 24 24"><rect width="24" height="24" rx="3" fill="#1a84e8"/><path d="M6 18V7h12v11h-3v-8h-1.500v8h-3v-8H9v8z" fill="#fff"/></svg>
  </div>
  <div class="task-cell task-on d-flex align-items-center justify-content-center">
    <svg width="24" height="28" viewBox="0 0 24 28"><ellipse cx="12" cy="14" rx="12" ry="14" fill="#f08020"/><ellipse cx="12" cy="14" rx="7" ry="13" fill="#f8b070"/><ellipse cx="12" cy="14" rx="2.500" ry="13" fill="#fff" opacity=".7"/></svg>
  </div>
  <div class="task-cell task-on d-flex align-items-center justify-content-center">
    <svg width="24" height="26" viewBox="0 0 24 26"><rect width="24" height="26" rx="3" fill="#fff"/><g fill="none" stroke="#3a8ee8" stroke-width="2"><circle cx="12" cy="9" r="3.500"/><circle cx="8" cy="14" r="3.500"/><circle cx="16" cy="14" r="3.500"/></g><rect x="8" y="23" width="8" height="3" fill="#e84060"/></svg>
  </div>
  <div class="task-cell d-flex align-items-center justify-content-center"><svg width="24" height="26" viewBox="0 0 28 30"><use href="#i-youku"/></svg></div>
  <div class="task-cell d-flex align-items-center justify-content-center">
    <svg width="24" height="26" viewBox="0 0 24 26"><rect width="24" height="26" rx="2" fill="#fff"/><circle cx="8" cy="10" r="4.500" fill="none" stroke="#2090e8" stroke-width="3"/><path d="M12 10c0 6-3 10-7 12" fill="none" stroke="#2090e8" stroke-width="3"/><path d="M16 3h4l-1 12h-2z" fill="#f0a020"/><circle cx="18" cy="20" r="2" fill="#e03030"/></svg>
  </div>
  <div class="task-cell task-on d-flex align-items-center justify-content-center"><svg width="24" height="24" viewBox="0 0 28 28"><use href="#i-qq"/></svg></div>
  <div class="task-cell task-on d-flex align-items-center justify-content-center">
    <svg width="24" height="26" viewBox="0 0 24 26" fill="none" stroke-width="3"><rect x="1.500" y="9.500" width="14" height="14" rx="1.500" stroke="#f09010"/><rect x="8.500" y="1.500" width="14" height="14" rx="1.500" stroke="#1a9ae0"/></svg>
  </div>
  <div class="task-cell d-flex align-items-center justify-content-center">
    <svg width="22" height="26" viewBox="0 0 22 26"><path d="M11 1l10 5v12l-10 7L1 18V6z" fill="#183a70" stroke="#c8d4e8" stroke-width="1.500"/><path d="M11 1l10 5-10 5L1 6z" fill="#fff"/><path d="M11 11v14" stroke="#c8d4e8" stroke-width="1.500"/></svg>
  </div>
  <div class="task-cell task-on task-now d-flex align-items-center justify-content-center">
    <svg width="24" height="24" viewBox="0 0 24 24"><path d="M12 0a12 12 0 0 1 10.400 6H12a6 6 0 0 0-5.600 3.800L3 3.800A12 12 0 0 1 12 0z" fill="#db4437"/><path d="M22.400 6A12 12 0 0 1 12 24l5.200-9A6 6 0 0 0 16 7.500z" fill="#f4c20d"/><path d="M12 24A12 12 0 0 1 3 3.800l5 8.800a4 4 0 0 0 4 5.400z" fill="#0f9d58"/><circle cx="12" cy="12" r="4.800" fill="#4285f4" stroke="#fff" stroke-width="1.400"/></svg>
  </div>
  <div class="task-cell task-on d-flex align-items-center justify-content-center">
    <svg width="24" height="26" viewBox="0 0 28 30"><use href="#i-youku"/></svg>
    <svg width="14" height="14" viewBox="0 0 14 14" class="youku-pause"><rect width="14" height="14" rx="2" fill="#5ab4f0"/><path d="M4 3h2v8H4zM8 3h2v8H8z" fill="#fff"/></svg>
  </div>
  <div class="task-cell task-on d-flex align-items-center justify-content-center">
    <svg width="24" height="24" viewBox="0 0 24 24"><path d="M2 20v-7a10 10 0 0 1 20 0v7h-3v-7a7 7 0 0 0-14 0v7z" fill="#1a2ad0"/><ellipse cx="12" cy="16" rx="6" ry="6" fill="#e8a020"/><path d="M5 16h14" stroke="#e02020" stroke-width="2"/></svg>
  </div>
  <div class="task-cell task-on d-flex align-items-center justify-content-center">
    <svg width="22" height="22" viewBox="0 0 22 22"><circle cx="11" cy="11" r="9.500" fill="#000" stroke="#fff" stroke-width="2"/><circle cx="11" cy="11" r="6" fill="#e82020"/></svg>
  </div>

  <div class="tray d-flex align-items-center">
    <svg width="12" height="7" viewBox="0 0 12 7" class="tray-chevron"><path d="M1 6l5-5 5 5" fill="none" stroke="#eee" stroke-width="1.200"/></svg>
    <svg width="18" height="16" viewBox="0 0 18 16" class="ms-1"><path d="M1 3l14-2v12l-14 1z" fill="none" stroke="#eee"/><path d="M5 9l3-4 2 1M11 7l-3 4-2-1" fill="none" stroke="#eee"/><circle cx="14" cy="12.500" r="3" fill="#f09010"/></svg>
    <svg width="17" height="15" viewBox="0 0 17 15" class="tray-net" fill="none" stroke="#eee"><path d="M5.500 3.500h11v8h-11zM10.500 11.500v3M7.500 14.500h6M.5.500h5v4h-5z"/></svg>
    <svg width="17" height="14" viewBox="0 0 17 14" class="ms-2" fill="none" stroke="#eee"><path d="M1 5h2.500L7 1.500v11L3.500 9H1zM9.500 4.500a3 3 0 0 1 0 5M11.500 2.500a6 6 0 0 1 0 9M13.500 1a9 9 0 0 1 0 12"/></svg>
    <svg width="23" height="13" viewBox="0 0 23 13" class="ms-2" fill="none" stroke="#eee"><rect x=".5" y=".5" width="22" height="12" rx="1.500"/><path d="M3 4h17M3 6.500h17" stroke-dasharray="1 1"/><path d="M6 9.500h11"/></svg>
    <div class="clock">22:23<br>2020/7/19</div>
    <div class="note-wrap">
      <svg width="16" height="18" viewBox="0 0 16 18" fill="#eee"><path d="M3 1h13v15H3zM0 3h1.500v14H0z"/><path d="M5 5h9M5 8h9M5 11h6" stroke="#101010"/></svg>
      <span class="note-badge">9</span>
    </div>
    <div class="note-wrap note-last">
      <svg width="16" height="16" viewBox="0 0 16 16" fill="#eee"><path d="M0 0h16v11H5l-3 3v-3H0z"/><path d="M3 3.500h10M3 6.500h10" stroke="#101010"/></svg>
      <span class="note-count">2</span>
    </div>
  </div>
</div>

</body>
</html>
